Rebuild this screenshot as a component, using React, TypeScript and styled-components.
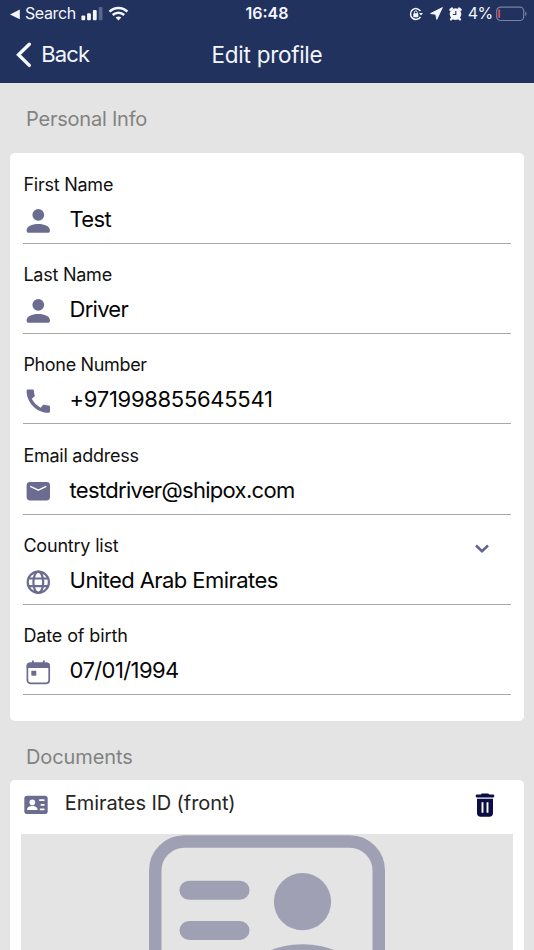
import React from "react";
import styled, { createGlobalStyle } from "styled-components";

const GlobalStyle = createGlobalStyle`
  * { box-sizing: border-box; }
  html, body { margin: 0; padding: 0; background: #e4e4e4; }
  body { font-family: Inter, "Liberation Sans", sans-serif; overflow: hidden; }
  svg { display: block; flex: none; }
`;

const Screen = styled.main`
  width: 534px;
  height: 950px;
  overflow: hidden;
  display: flex;
  flex-direction: column;
  background: #e4e4e4;
`;

const Header = styled.header`
  flex: none;
  height: 82.6px;
  background: #21325f;
  color: #f4f6fc;
`;

const StatusBar = styled.div`
  display: grid;
  grid-template-columns: 1fr auto 1fr;
  height: 27px;
  padding: 0 7px 0 10px;
`;

const StatusGroup = styled.div<{ $end?: boolean }>`
  display: flex;
  align-items: center;
  justify-content: ${(p) => (p.$end ? "flex-end" : "flex-start")};
`;

const StatusText = styled.span<{ $spacing?: number }>`
  font-size: 16px;
  line-height: 27px;
  white-space: nowrap;
  letter-spacing: ${(p) => p.$spacing ?? 0}px;
`;

const Clock = styled(StatusText)`
  font-weight: 600;
  margin-right: 3px;
`;

const StatusIcons = styled.div`
  display: flex;
  align-items: center;
  gap: 6.5px;
  margin-right: 5.5px;
`;

const NavBar = styled.nav`
  display: grid;
  grid-template-columns: 1fr auto 1fr;
  align-items: center;
  height: 55px;
  padding: 0 16px;
`;

const BackButton = styled.button`
  display: flex;
  align-items: center;
  gap: 9.2px;
  padding: 0;
  border: 0;
  background: none;
  color: inherit;
  font: 400 22px/28px Inter, sans-serif;
  letter-spacing: -0.8px;
`;

const BackText = styled.span`
  padding-bottom: 1px;
`;

const NavTitle = styled.h1`
  margin: 0;
  font: 400 22.5px/28px Inter, sans-serif;
  letter-spacing: -0.28px;
`;

const SectionTitle = styled.h2<{ $height: number; $spacing: number }>`
  flex: none;
  margin: 0;
  height: ${(p) => p.$height}px;
  padding: 23.4px 26px 0;
  color: #828282;
  font-size: 20px;
  font-weight: 400;
  line-height: 26px;
  letter-spacing: ${(p) => p.$spacing}px;
`;

const Card = styled.section`
  flex: none;
  margin: 0 10.3px;
  border-radius: 5px;
  background: #fff;
`;

const FieldList = styled(Card)`
  padding: 0 13.1px 25.6px;
`;

const Field = styled.div`
  height: 90.3px;
  padding-top: 19.3px;
  border-bottom: 1.5px solid #a8a8a8;
`;

const FieldHead = styled.div`
  display: flex;
  justify-content: space-between;
  height: 24px;
  padding-right: 20.5px;
`;

const Label = styled.label<{ $spacing: number }>`
  color: #111;
  font-size: 18px;
  line-height: 24px;
  letter-spacing: ${(p) => p.$spacing}px;
`;

const FieldBody = styled.div`
  display: flex;
  align-items: flex-start;
  gap: 16.2px;
  padding-top: 8px;
`;

const IconSlot = styled.span`
  width: 30px;
  margin-top: 0.9px;
  color: #6b6c90;
`;

const Value = styled.span<{ $spacing: number }>`
  color: #050505;
  font-size: 22px;
  line-height: 28px;
  white-space: nowrap;
  letter-spacing: ${(p) => p.$spacing}px;
`;

const ChevronSlot = styled.span`
  padding-top: 9.5px;
`;

const DocumentCard = styled(Card)`
  padding: 0 10.5px;
  height: 400px;
`;

const DocumentHead = styled.div`
  display: flex;
  align-items: center;
  height: 54px;
  padding: 0 18px 3px 3px;
`;

const DocumentName = styled.span`
  flex: 1;
  padding: 0 0 5px 17px;
  color: #252525;
  font-size: 20px;
  line-height: 26px;
  letter-spacing: -0.08px;
`;

const Preview = styled.div`
  display: flex;
  justify-content: center;
  padding-top: 1.5px;
  height: 346px;
  background: #e4e4e4;
`;

const UserIcon = () => (
  <svg width="30" height="30" viewBox="0 0 30 30" fill="currentColor">
    <circle cx="15.3" cy="8.8" r="5.9" />
    <path d="M3.6 24.4c0-4 5.2-6.3 11.7-6.3S27 20.4 27 24.4c0 1.5-.9 2.3-2.2 2.3h-19c-1.3 0-2.2-.8-2.2-2.3z" />
  </svg>
);

const PhoneIcon = () => (
  <svg width="30" height="30" viewBox="0 0 30 30" fill="currentColor">
    <path transform="translate(-.3 -.5) scale(1.3)" d="M20.01 15.38c-1.23 0-2.42-.2-3.53-.56-.35-.12-.74-.03-1.01.24l-1.57 1.97c-2.83-1.35-5.48-3.9-6.89-6.83l1.95-1.66c.27-.28.35-.67.24-1.02-.37-1.11-.56-2.3-.56-3.53 0-.54-.45-.99-.99-.99H4.19C3.65 3 3 3.24 3 3.99 3 13.28 10.73 21 20.01 21c.71 0 .99-.63.99-1.18v-3.45c0-.54-.45-.99-.99-.99z" />
  </svg>
);

const MailIcon = () => (
  <svg width="30" height="30" viewBox="0 0 30 30">
    <rect x="3.6" y="6" width="23.4" height="18.4" rx="3.4" fill="currentColor" />
    <path d="M7.3 10.3l8 3.9 8-3.9" fill="none" stroke="#fff" strokeWidth="1.5" strokeLinejoin="round" />
  </svg>
);

const GlobeIcon = () => (
  <svg width="30" height="30" viewBox="0 0 30 30" fill="none" stroke="currentColor" strokeWidth="2.2">
    <circle cx="15.3" cy="15.3" r="10.6" />
    <ellipse cx="15.3" cy="15.3" rx="4.9" ry="10.6" />
    <path d="M5.3 11.5h20M5.3 19.1h20" />
  </svg>
);

const CalendarIcon = () => (
  <svg width="30" height="30" viewBox="0 0 30 30">
    <rect x="4.4" y="6.3" width="21.8" height="20" rx="3" fill="none" stroke="currentColor" strokeWidth="1.7" />
    <path d="M3.6 11V9A3.4 3.4 0 0 1 7 5.6h16.6A3.4 3.4 0 0 1 27 9v2z" fill="currentColor" />
    <path d="M9.9 3.6V7M20.8 3.6V7" stroke="currentColor" strokeWidth="1.8" />
    <rect x="8.3" y="13.8" width="5" height="5" rx=".7" fill="currentColor" />
  </svg>
);

const LocationArrow = () => (
  <svg width="13" height="13" viewBox="0 0 13 13" fill="currentColor" stroke="currentColor" strokeWidth=".9" strokeLinejoin="round">
    <path d="M.6 6.500L12.400.6 6.800 12.400 5.700 7.300z" />
  </svg>
);

const RotationLock = () => (
  <svg width="14" height="14" viewBox="0 0 14 14" fill="none" stroke="currentColor">
    <path d="M11.500 4.100A5.400 5.400 0 1 0 11.500 9.900" strokeWidth="1.500" />
    <path d="M10 5.900h4l-2 2.700z" fill="currentColor" stroke="none" />
    <rect x="4.300" y="6.300" width="5" height="3.900" rx=".5" fill="currentColor" stroke="none" />
    <path d="M5.400 6.600V5.300a1.400 1.400 0 0 1 2.800 0v1.300" strokeWidth="1" />
  </svg>
);

const AlarmIcon = () => (
  <svg width="13" height="14" viewBox="0 0 13 14" fill="currentColor">
    <circle cx="6.500" cy="7.100" r="5.800" />
    <path d="M1.300 2.800L3 1.400M11.700 2.800L10 1.400M2 12.400l1.600-1.500M11 12.400l-1.600-1.500" stroke="currentColor" strokeWidth="2.200" strokeLinecap="round" />
    <path d="M6.800 3.900v3.600H3.900" fill="none" stroke="#21325f" strokeWidth="1.100" />
  </svg>
);

const Battery = () => (
  <svg width="31" height="16" viewBox="0 0 31 16">
    <rect x=".7" y="1.100" width="27" height="13.400" rx="3.800" fill="none" stroke="#7782a0" strokeWidth="1.200" />
    <path d="M29.200 5.500v4.700c1.700-.7 1.700-4 0-4.700z" fill="#7782a0" />
    <rect x="2.300" y="3.500" width="1.800" height="8.500" rx=".7" fill="#e84a50" />
  </svg>
);

const CellularWifi = () => (
  <svg width="48" height="16" viewBox="0 0 48 16" fill="currentColor">
    <rect x=".4" y="9.600" width="3.800" height="4.700" rx="1" />
    <rect x="6.100" y="7.300" width="3.800" height="7" rx="1" />
    <rect x="11.900" y="3.900" width="3.800" height="10.400" rx="1" />
    <rect x="17.700" y="1" width="3.800" height="13.300" rx="1" opacity=".27" />
    <g fill="none" stroke="currentColor" strokeWidth="2.500">
      <path d="M28.500 5.700c5.100-5 12.800-5 17.900 0" />
      <path d="M31.700 9c3.300-3.100 8.200-3.100 11.500 0" />
    </g>
    <path d="M34.600 11.500c1.700-1.400 4-1.400 5.700 0l-2.850 2.900z" />
  </svg>
);

const IdBadge = () => (
  <svg width="24" height="20" viewBox="0 0 24 20">
    <rect x=".3" y=".8" width="23.400" height="18.300" rx="2.800" fill="#6b6c90" />
    <g fill="#fff">
      <circle cx="8.300" cy="7.400" r="2.800" />
      <path d="M3 14.900c0-2.400 2.400-3.900 5.300-3.900s5.300 1.500 5.300 3.900z" />
      <rect x="15" y="4.200" width="5.700" height="1.800" rx=".8" />
      <rect x="16.500" y="8.900" width="4.200" height="1.800" rx=".8" />
      <rect x="15.700" y="13.500" width="5" height="1.800" rx=".8" />
    </g>
  </svg>
);

const TrashIcon = () => (
  <svg width="20" height="26" viewBox="0 0 20 26" fill="#0b0d43">
    <rect x="6" y="1.500" width="8" height="3" rx="1.200" />
    <rect x=".8" y="2.500" width="18.400" height="3" rx="1" />
    <path d="M2 6.800h16v14.300a3.700 3.700 0 0 1-3.700 3.700H5.700A3.700 3.700 0 0 1 2 21.100z" />
    <path d="M7.500 10.300v10.500M12.500 10.300v10.500" stroke="#fff" strokeWidth="1.900" />
  </svg>
);

const IdPlaceholder = () => (
  <svg width="236" height="320" viewBox="0 0 236 320" fill="#a0a0b4">
    <rect x="6.250" y="6.500" width="223.500" height="307" rx="29" fill="none" stroke="#a0a0b4" strokeWidth="12.500" />
    <rect x="30.500" y="45.700" width="70" height="19" rx="9.500" />
    <rect x="30.500" y="85.900" width="70" height="19" rx="9.500" />
    <circle cx="153.500" cy="66.700" r="28.600" />
    <ellipse cx="153.500" cy="135.200" rx="50" ry="26" />
  </svg>
);

interface FieldData {
  label: string;
  value: string;
  icon: React.ReactNode;
  labelSpacing: number;
  valueSpacing: number;
  select?: boolean;
}

const fields: FieldData[] = [
  { label: "First Name", value: "Test", icon: <UserIcon />, labelSpacing: -0.24, valueSpacing: -0.7 },
  { label: "Last Name", value: "Driver", icon: <UserIcon />, labelSpacing: -0.24, valueSpacing: -0.75 },
  { label: "Phone Number", value: "+971998855645541", icon: <PhoneIcon />, labelSpacing: -0.33, valueSpacing: -0.3 },
  { label: "Email address", value: "testdriver@shipox.com", icon: <MailIcon />, labelSpacing: -0.25, valueSpacing: -0.7 },
  { label: "Country list", value: "United Arab Emirates", icon: <GlobeIcon />, labelSpacing: -0.2, valueSpacing: -0.57, select: true },
  { label: "Date of birth", value: "07/01/1994", icon: <CalendarIcon />, labelSpacing: -0.12, valueSpacing: -0.6 },
];

export default function App() {
  return (
    <Screen>
      <GlobalStyle />
      <Header>
        <StatusBar>
          <StatusGroup>
            <svg width="15" height="12" viewBox="0 0 15 12" fill="currentColor">
              <path d="M0 6.400L9.800 1.500v9.800z" />
            </svg>
            <StatusText $spacing={-0.4}>Search</StatusText>
            <svg width="5" height="1" />
            <CellularWifi />
          </StatusGroup>
          <Clock>16:48</Clock>
          <StatusGroup $end>
            <StatusIcons>
              <RotationLock />
              <LocationArrow />
              <AlarmIcon />
            </StatusIcons>
            <StatusText $spacing={-0.6}>4%</StatusText>
            <svg width="3.500" height="1" />
            <Battery />
          </StatusGroup>
        </StatusBar>
        <NavBar>
          <BackButton>
            <svg width="16" height="26" viewBox="0 0 16 26" fill="none" stroke="currentColor" strokeWidth="3.400">
              <path d="M13.300 2.200L2.500 12.800l10.800 10.600" strokeLinecap="round" />
            </svg>
            <BackText>Back</BackText>
          </BackButton>
          <NavTitle>Edit profile</NavTitle>
        </NavBar>
      </Header>
      <SectionTitle $height={70.8} $spacing={-0.22}>Personal Info</SectionTitle>
      <FieldList>
        {fields.map((f) => (
          <Field key={f.label}>
            <FieldHead>
              <Label $spacing={f.labelSpacing}>{f.label}</Label>
              {f.select && (
                <ChevronSlot>
                  <svg width="16" height="12" viewBox="0 0 16 12" fill="none" stroke="#62638a" strokeWidth="2.600">
                    <path d="M2 2.500l6 5.700 6-5.700" />
                  </svg>
                </ChevronSlot>
              )}
            </FieldHead>
            <FieldBody>
              <IconSlot>{f.icon}</IconSlot>
              <Value $spacing={f.valueSpacing}>{f.value}</Value>
            </FieldBody>
          </Field>
        ))}
      </FieldList>
      <SectionTitle $height={59} $spacing={-0.1}>Documents</SectionTitle>
      <DocumentCard>
        <DocumentHead>
          <IdBadge />
          <DocumentName>Emirates ID (front)</DocumentName>
          <TrashIcon />
        </DocumentHead>
        <Preview>
          <IdPlaceholder />
        </Preview>
      </DocumentCard>
    </Screen>
  );
}
